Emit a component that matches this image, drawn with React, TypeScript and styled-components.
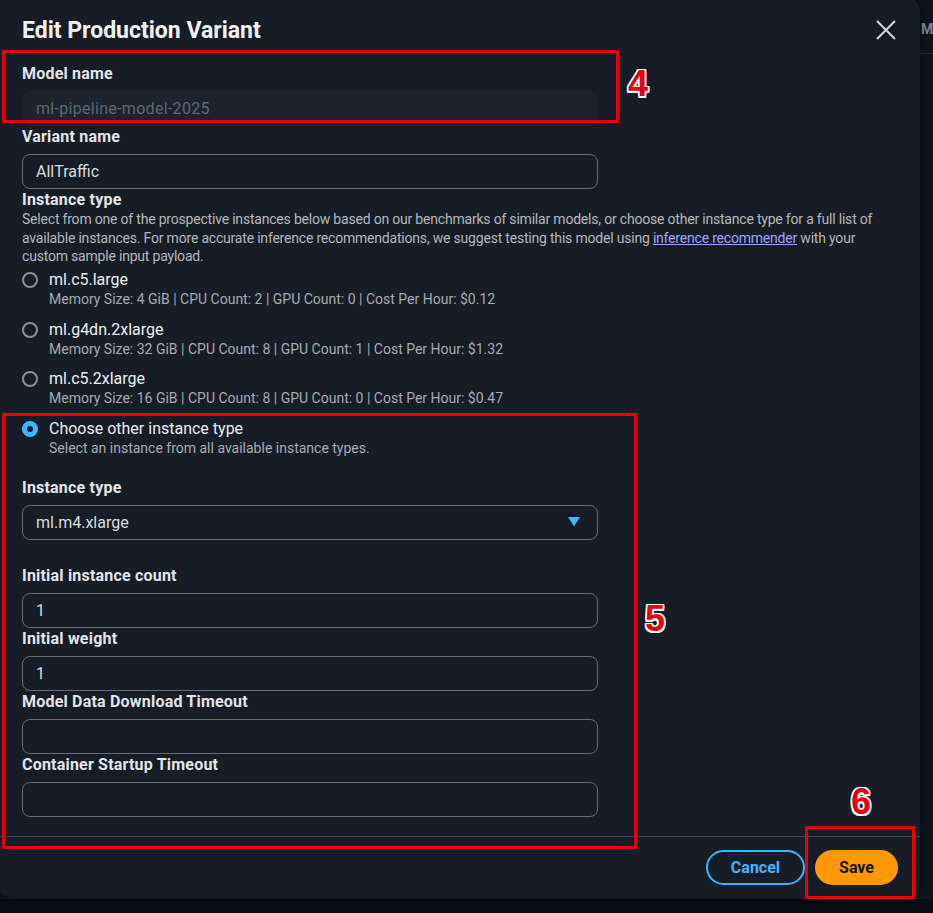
import React from "react";
import styled, { createGlobalStyle } from "styled-components";

const GlobalStyle = createGlobalStyle`
  * { box-sizing: border-box; }
  html, body { margin: 0; padding: 0; background: #0b0f15; }
  body { font-family: Roboto, "Open Sans", "Liberation Sans", sans-serif; }
`;

const Page = styled.div`
  position: relative;
  width: 933px;
  height: 913px;
  overflow: hidden;
  background: #10151d;
`;

const PageHeader = styled.div`
  height: 54px;
  border-bottom: 1px solid #232b36;
  padding: 21px 0 0 921px;
  white-space: nowrap;
  overflow: hidden;
  color: #7d8998;
  font-size: 14px;
  font-weight: 700;
`;

const PageFooterStrip = styled.div`
  position: absolute;
  left: 0;
  right: 0;
  bottom: 0;
  height: 15px;
  background: #0a0e14;
  border-top: 1px solid #161c25;
`;

const Modal = styled.div`
  position: absolute;
  left: -4px;
  top: -4px;
  width: 924px;
  height: 902px;
  background: #161d26;
  border-radius: 16px;
  display: flex;
  flex-direction: column;
  box-shadow: 0 2px 12px rgba(0, 0, 0, 0.4);
`;

const Header = styled.div`
  display: flex;
  justify-content: space-between;
  align-items: flex-start;
  padding: 21px 24px 0 26px;
`;

const Title = styled.h2`
  margin: 0;
  font-size: 23px;
  line-height: 28px;
  font-weight: 700;
  color: #f3f3f7;
`;

const CloseButton = styled.button`
  display: flex;
  padding: 0;
  margin-top: 3px;
  border: none;
  background: transparent;
  color: #d5d7dc;
  cursor: pointer;
`;

const Body = styled.div`
  display: flex;
  flex-direction: column;
  padding: 18px 26px 0 26px;
  flex: 1;
`;

const Field = styled.div`
  display: flex;
  flex-direction: column;
`;

const Label = styled.label<{ $gap?: number }>`
  display: block;
  font-size: 16px;
  line-height: 21px;
  font-weight: 700;
  letter-spacing: 0.2px;
  color: #e3e4e8;
  margin-bottom: ${(p) => p.$gap ?? 7}px;
`;

const Input = styled.div<{ $disabled?: boolean }>`
  width: 576px;
  height: 35px;
  border-radius: 8px;
  border: 1px solid ${(p) => (p.$disabled ? "#1c232d" : "#656a74")};
  background: ${(p) => (p.$disabled ? "#1c232d" : "transparent")};
  color: ${(p) => (p.$disabled ? "#5f6773" : "#d9dadf")};
  font-size: 16px;
  letter-spacing: ${(p) => (p.$disabled ? "0.3px" : "0")};
  display: flex;
  align-items: center;
  padding: 0 13px;
`;

const SelectBox = styled(Input)`
  justify-content: space-between;
  padding-right: 17px;
`;

const Description = styled.p`
  margin: 0;
  font-size: 14px;
  line-height: 18.5px;
  letter-spacing: -0.2px;
  color: #b4b6bd;
`;

const Link = styled.a`
  color: #a0a3ff;
  text-decoration: underline;
`;

const RadioGroup = styled.div`
  display: flex;
  flex-direction: column;
  gap: 11.5px;
  margin-top: 4.5px;
`;

const RadioRow = styled.div`
  display: flex;
  align-items: flex-start;
  gap: 11px;
`;

const RadioCircle = styled.span<{ $checked?: boolean }>`
  flex: none;
  width: 16px;
  height: 16px;
  margin-top: 2px;
  border-radius: 50%;
  border: ${(p) => (p.$checked ? "5px solid #42b4ff" : "2px solid #8c8f97")};
  background: ${(p) => (p.$checked ? "#161d26" : "transparent")};
`;

const RadioText = styled.div`
  display: flex;
  flex-direction: column;
`;

const RadioTitle = styled.span`
  font-size: 16px;
  line-height: 20px;
  color: #eceef1;
`;

const RadioDesc = styled.span`
  font-size: 14px;
  line-height: 18px;
  color: #a7aab2;
`;

const SubSection = styled.div`
  display: flex;
  flex-direction: column;
  margin-top: 20px;
`;

const Spacer = styled.div<{ $h: number }>`
  height: ${(p) => p.$h}px;
`;

const Footer = styled.div`
  border-top: 1px solid #3f4651;
  display: flex;
  justify-content: flex-end;
  gap: 10px;
  padding: 13px 22px 13px 0;
`;

const Button = styled.button<{ $primary?: boolean }>`
  height: 35px;
  border-radius: 20px;
  border: 2px solid ${(p) => (p.$primary ? "#ff9900" : "#42b4ff")};
  background: ${(p) => (p.$primary ? "#ff9900" : "transparent")};
  color: ${(p) => (p.$primary ? "#0f141a" : "#42b4ff")};
  font-family: inherit;
  font-size: 16px;
  font-weight: 700;
  padding: 0 ${(p) => (p.$primary ? 22 : 23)}px;
  cursor: pointer;
`;

const AnnotationBox = styled.div`
  position: absolute;
  border: 3px solid #e8000b;
  pointer-events: none;
`;

const AnnotationNumber = styled.span`
  position: absolute;
  font-family: "Liberation Sans", Arial, sans-serif;
  font-weight: 700;
  font-size: 36px;
  line-height: 36px;
  color: #e8000b;
  text-shadow: -1.5px -1.5px 0 #fff, 1.5px -1.5px 0 #fff, -1.5px 1.5px 0 #fff,
    1.5px 1.5px 0 #fff, 0 1.5px 0 #fff, 0 -1.5px 0 #fff, 1.5px 0 0 #fff,
    -1.5px 0 0 #fff;
`;

const instances = [
  {
    name: "ml.c5.large",
    desc: "Memory Size: 4 GiB | CPU Count: 2 | GPU Count: 0 | Cost Per Hour: $0.12",
  },
  {
    name: "ml.g4dn.2xlarge",
    desc: "Memory Size: 32 GiB | CPU Count: 8 | GPU Count: 1 | Cost Per Hour: $1.32",
  },
  {
    name: "ml.c5.2xlarge",
    desc: "Memory Size: 16 GiB | CPU Count: 8 | GPU Count: 0 | Cost Per Hour: $0.47",
  },
  {
    name: "Choose other instance type",
    desc: "Select an instance from all available instance types.",
    checked: true,
  },
];

const CloseIcon = () => (
  <svg width="20" height="20" viewBox="0 0 20 20" fill="none">
    <path d="M1 1 L19 19 M19 1 L1 19" stroke="currentColor" strokeWidth="2" />
  </svg>
);

const CaretDown = () => (
  <svg width="12" height="10" viewBox="0 0 12 10">
    <path d="M0 0 H12 L6 9.5 Z" fill="#42b4ff" />
  </svg>
);

export default function App() {
  return (
    <>
      <GlobalStyle />
      <Page>
        <PageHeader>Model</PageHeader>
        <PageFooterStrip />
        <Modal>
          <Header>
            <Title>Edit Production Variant</Title>
            <CloseButton aria-label="Close">
              <CloseIcon />
            </CloseButton>
          </Header>
          <Body>
            <Field>
              <Label>Model name</Label>
              <Input $disabled>ml-pipeline-model-2025</Input>
            </Field>
            <Field>
              <Label>Variant name</Label>
              <Input>AllTraffic</Input>
            </Field>
            <Field>
              <Label $gap={0}>Instance type</Label>
              <Description>
                Select from one of the prospective instances below based on our
                benchmarks of similar models, or choose other instance type for a
                full list of available instances. For more accurate inference
                recommendations, we suggest testing this model using{" "}
                <Link href="#">inference recommender</Link> with your custom
                sample input payload.
              </Description>
            </Field>
            <RadioGroup>
              {instances.map((it) => (
                <RadioRow key={it.name}>
                  <RadioCircle $checked={it.checked} />
                  <RadioText>
                    <RadioTitle>{it.name}</RadioTitle>
                    <RadioDesc>{it.desc}</RadioDesc>
                  </RadioText>
                </RadioRow>
              ))}
            </RadioGroup>
            <SubSection>
              <Field>
                <Label>Instance type</Label>
                <SelectBox>
                  <span>ml.m4.xlarge</span>
                  <CaretDown />
                </SelectBox>
              </Field>
              <Spacer $h={25.5} />
              <Field>
                <Label>Initial instance count</Label>
                <Input>1</Input>
              </Field>
              <Field>
                <Label>Initial weight</Label>
                <Input>1</Input>
              </Field>
              <Field>
                <Label>Model Data Download Timeout</Label>
                <Input />
              </Field>
              <Field>
                <Label>Container Startup Timeout</Label>
                <Input />
              </Field>
            </SubSection>
          </Body>
          <Footer>
            <Button>Cancel</Button>
            <Button $primary>Save</Button>
          </Footer>
        </Modal>
        <AnnotationBox style={{ left: 2, top: 50, width: 617, height: 73 }} />
        <AnnotationNumber style={{ left: 628, top: 66 }}>4</AnnotationNumber>
        <AnnotationBox style={{ left: 2, top: 413, width: 635, height: 436 }} />
        <AnnotationNumber style={{ left: 645, top: 601 }}>5</AnnotationNumber>
        <AnnotationBox style={{ left: 805, top: 826, width: 110, height: 73 }} />
        <AnnotationNumber style={{ left: 851, top: 784 }}>6</AnnotationNumber>
      </Page>
    </>
  );
}
